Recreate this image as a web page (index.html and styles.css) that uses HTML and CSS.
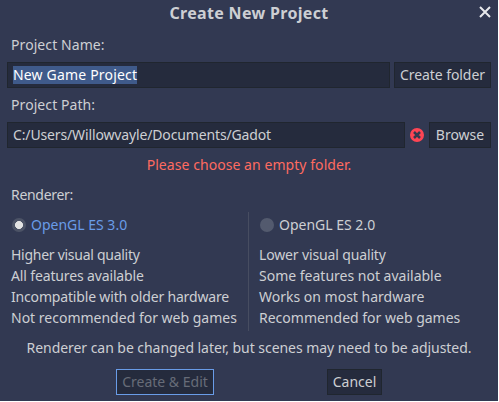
FILE: index.html
```html
<!DOCTYPE html>
<html lang="en">
<head>
<meta charset="utf-8">
<title>Create New Project</title>
<link rel="stylesheet" href="styles.css">
</head>
<body>
<main class="dialog">
  <header class="titlebar">
    <h1 class="title">Create New Project</h1>
    <svg class="close" width="12" height="12" viewBox="0 0 12 12"><path d="M1 1L11 11M11 1L1 11" fill="none" stroke="#e8e9ec" stroke-width="2"/></svg>
  </header>
  <div class="label first">Project Name:</div>
  <div class="row">
    <div class="field"><span class="selected">New Game Project</span></div>
    <div class="button create-folder"><span>Create folder</span></div>
  </div>
  <div class="label">Project Path:</div>
  <div class="row">
    <div class="field path"><span>C:/Users/Willowvayle/Documents/Gadot</span></div>
    <svg class="status" width="14" height="14" viewBox="0 0 14 14"><circle cx="7" cy="7" r="7" fill="#ff4554"/><path d="M4 4L10 10M10 4L4 10" fill="none" stroke="#333a4f" stroke-width="2.5"/></svg>
    <div class="button browse"><span>Browse</span></div>
  </div>
  <div class="error"><span>Please choose an empty folder.</span></div>
  <div class="label renderer">Renderer:</div>
  <div class="options">
    <section class="option">
      <div class="choice active"><i class="radio"></i><span>OpenGL ES 3.0</span></div>
      <div class="line tightest">Higher visual quality</div>
      <div class="line tight">All features available</div>
      <div class="line tighter">Incompatible with older hardware</div>
      <div class="line">Not recommended for web games</div>
    </section>
    <section class="option second">
      <div class="choice"><i class="radio"></i><span>OpenGL ES 2.0</span></div>
      <div class="line tight">Lower visual quality</div>
      <div class="line">Some features not available</div>
      <div class="line">Works on most hardware</div>
      <div class="line">Recommended for web games</div>
    </section>
  </div>
  <div class="note"><span>Renderer can be changed later, but scenes may need to be adjusted.</span></div>
  <footer class="actions">
    <div class="button confirm"><span>Create &amp; Edit</span></div>
    <div class="button cancel"><span>Cancel</span></div>
  </footer>
</main>
</body>
</html>
```
FILE: styles.css
```css
* { box-sizing: border-box; }
body { margin: 0; background: #fff; overflow: hidden; }
.dialog {
  width: 498px;
  height: 401px;
  padding: 0 7px;
  background: #323952;
  color: #cdcfd3;
  font: 14px/19px "Noto Sans", sans-serif;
  white-space: nowrap;
}
.titlebar {
  display: flex;
  justify-content: center;
  height: 35px;
  padding-top: 2px;
  position: relative;
}
.title { margin: 0; font-size: 16px; line-height: 22px; font-weight: 700; letter-spacing: 0.33px; }
.close { position: absolute; right: 0; top: 6px; }
.label { height: 27px; margin-top: 7px; padding-left: 4px; letter-spacing: 0.08px; }
.label.first { margin-top: 0; }
.label.renderer { letter-spacing: -0.3px; }
.row { display: flex; height: 26px; }
.field, .button {
  height: 26px;
  background: #252b3d;
  border: 1px solid #20262f;
  line-height: 18px;
  padding-top: 3px;
}
.field { flex: 1; padding-left: 5px; }
.path { letter-spacing: -0.14px; }
.button { display: flex; justify-content: center; }
.selected { display: inline-block; height: 18px; background: #3f5a8a; color: #fff; letter-spacing: 0.18px; }
.create-folder { width: 97px; margin-left: 4px; letter-spacing: -0.08px; }
.status { margin: 6px 5px 0; }
.browse { width: 62px; }
.error { margin-top: 7px; height: 23px; text-align: center; color: #ff6b60; letter-spacing: 0.06px; }
.options { display: flex; padding-left: 4px; height: 119px; }
.option { width: 237px; padding-top: 3px; }
.second { border-left: 1px solid #474d61; padding-left: 10px; width: 243px; }
.choice { display: flex; height: 30px; }
.active { color: #699ce8; }
.radio { width: 14px; height: 14px; margin: 3px 5px 0 1px; border-radius: 50%; background: #535a6e; }
.active .radio { background: radial-gradient(circle, #e2e2e2 3.7px, #4c5366 4.3px); }
.line { height: 21px; }
.tight { letter-spacing: -0.14px; }
.tighter { letter-spacing: -0.17px; }
.tightest { letter-spacing: -0.27px; }
.note { margin-top: 7px; height: 31px; text-align: center; letter-spacing: -0.05px; }
.actions { display: flex; padding-left: 109px; }
.confirm { width: 98px; border-color: #699ce8; color: #676c78; }
.cancel { width: 55px; margin-left: 113px; }
```
